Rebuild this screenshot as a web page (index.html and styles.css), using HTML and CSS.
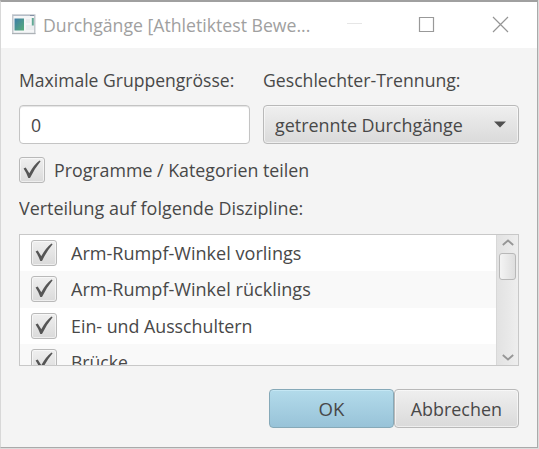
FILE: index.html
```html
<!DOCTYPE html>
<html lang="de">
<head>
<meta charset="utf-8">
<title>Durchgänge</title>
<link rel="stylesheet" href="styles.css">
</head>
<body>
<svg class="defs" width="0" height="0"><defs>
<linearGradient id="appfill" x1="0" y1="0" x2="1" y2="1"><stop offset="0" stop-color="#3e7da8"/><stop offset="1" stop-color="#58ad79"/></linearGradient>
<symbol id="check" viewBox="0 0 18 19"><path d="M.6 8.600 L2.700 7.500 L6.300 13.200 Q10.500 5 16.500 .4 L17.600 1.200 Q11.500 8.500 7 18 L5.300 18 Q3.500 13 .6 8.600Z" fill="#555"/></symbol>
</defs></svg>
<div class="window">
  <header class="titlebar">
    <svg class="app-icon" width="24" height="21" viewBox="0 0 24 21"><rect x=".75" y="1" width="22" height="18.500" fill="#f5f6f7" stroke="#c3c8cd" stroke-width="1.500"/><path d="M0 19.500h23.500" stroke="#adb2b6"/><path d="M1 1.500h22" stroke="#b4bdc8"/><rect x="2.500" y="4.500" width="9.500" height="12" fill="url(#appfill)"/><path d="M14 5h4v4h-4zM14 11h8v5h-8z" fill="#ebedef"/><path d="M20.800 4v7.500" stroke="#62a995" stroke-width="2"/><path d="M18 1.500h4" stroke="#8491a5"/></svg>
    <span class="title"><span class="t t-title">Durchgänge [Athletiktest Bewe...</span></span>
    <svg class="controls" width="170" height="18" viewBox="0 0 170 18"><path d="M0 8.500h15" stroke="#e6e6e6"/><path d="M72.500 2.500h14v14h-14z" fill="none" stroke="#999" stroke-width="1.200"/><path d="M146 2l15 15M161 2l-15 15" stroke="#959595" stroke-width="1.200"/></svg>
  </header>
  <main class="content">
    <div class="fields">
      <label class="label"><span class="t t-max">Maximale Gruppengrösse:</span></label>
      <label class="label"><span class="t t-sex">Geschlechter-Trennung:</span></label>
      <div class="input"><span class="t t-zero">0</span></div>
      <div class="select button-face"><span class="t t-select">getrennte Durchgänge</span><svg class="arrow" width="12" height="7" viewBox="0 0 12 7"><path d="M0 .4h12L6 6.600z" fill="#505050"/></svg></div>
    </div>
    <div class="option"><span class="box button-face"><svg width="18" height="19"><use href="#check"/></svg></span><span class="t t-option">Programme / Kategorien teilen</span></div>
    <div class="list-label"><span class="t t-list">Verteilung auf folgende Diszipline:</span></div>
    <div class="list">
      <div class="rows">
        <div class="row"><span class="box button-face"><svg width="18" height="19"><use href="#check"/></svg></span><span class="t t-r1">Arm-Rumpf-Winkel vorlings</span></div>
        <div class="row"><span class="box button-face"><svg width="18" height="19"><use href="#check"/></svg></span><span class="t t-r2">Arm-Rumpf-Winkel rücklings</span></div>
        <div class="row"><span class="box button-face"><svg width="18" height="19"><use href="#check"/></svg></span><span class="t t-r3">Ein- und Ausschultern</span></div>
        <div class="row"><span class="box button-face"><svg width="18" height="19"><use href="#check"/></svg></span><span class="t t-r4">Brücke</span></div>
      </div>
      <div class="scrollbar">
        <svg width="12" height="7" viewBox="0 0 12 7"><path d="M.8 6L6 1.500 11.200 6" fill="none" stroke="#969696" stroke-width="1.800"/></svg>
        <div class="thumb"></div>
        <svg class="down" width="12" height="7" viewBox="0 0 12 7"><path d="M.8 1L6 5.500 11.200 1" fill="none" stroke="#969696" stroke-width="1.800"/></svg>
      </div>
    </div>
    <div class="actions">
      <div class="button primary"><span class="t t-ok">OK</span></div>
      <div class="button button-face"><span class="t t-cancel">Abbrechen</span></div>
    </div>
  </main>
</div>
</body>
</html>
```
FILE: styles.css
```css
* { box-sizing: border-box; }
body {
  margin: 0;
  width: 539px;
  height: 449px;
  overflow: hidden;
  background: #dcdcdc;
  font: 18.6px/24px "Open Sans", "Noto Sans", sans-serif;
  color: #484848;
}
.defs { display: block; height: 0; }
.window {
  width: 538px;
  height: 448px;
  border: 1px solid #aaa;
  border-top: 2px solid #a0a0a0;
  border-left-color: #d8d8d8;
  background: #f4f4f4;
}
.titlebar {
  display: flex;
  height: 46px;
  padding: 12px 0 0 11px;
  background: #fff;
  color: #a0a0a0;
}
.app-icon { flex: none; }
.title { width: 303px; padding-left: 7px; margin-top: -1px; }
.controls { flex: none; margin-left: 8px; margin-top: 1px; }
.t { display: inline-block; white-space: nowrap; transform-origin: left center; }
.t-title { transform: scaleX(.95); }
.t-max { transform: scaleX(.944); }
.t-sex { transform: scaleX(.949); }
.t-zero { transform: scaleX(.95); }
.t-select { transform: scaleX(.963); }
.t-option { transform: scaleX(.957); }
.t-list { transform: scaleX(.964); }
.t-r1, .t-r2 { transform: scaleX(.972); }
.t-r3 { transform: scaleX(.957); }
.t-r4 { transform: scaleX(.945); }
.t-cancel { transform: scaleX(.962); }
.content { padding: 20px 18px 0; }
.fields {
  display: grid;
  grid-template-columns: 231px 256px;
  grid-template-rows: 37px 39px;
  column-gap: 13px;
}
.input, .select {
  border: 1px solid #c4c4c4;
  border-radius: 4px;
  display: flex;
  align-items: center;
  padding: 0 12px 0 11px;
}
.input { background: #fff; box-shadow: inset 0 1px 1px #e4e4e4; }
.button-face {
  background: linear-gradient(#efefef, #dadada);
  border: 1px solid #b9b9b9;
  box-shadow: inset 0 0 0 1px rgba(255,255,255,.55);
}
.arrow { margin-left: auto; }
.option { display: flex; align-items: center; height: 26px; margin-top: 13px; }
.box {
  flex: none;
  display: flex;
  align-items: center;
  justify-content: center;
  width: 26px;
  height: 26px;
  border-radius: 3px;
}
.box svg { flex: none; margin-top: -1px; }
.option .box { margin-right: 9px; }
.list-label { margin-top: 13px; height: 24px; }
.list {
  display: flex;
  height: 132px;
  margin-top: 14px;
  border: 1px solid #c8c8c8;
  background: #fff;
  overflow: hidden;
}
.rows { flex: 1; }
.row { display: flex; align-items: center; height: 36.300px; padding-left: 11px; }
.row:nth-child(even) { background: #f9f9f9; }
.row .box { margin-right: 14px; }
.scrollbar {
  display: flex;
  flex-direction: column;
  align-items: center;
  width: 22px;
  padding: 4px 0;
  border-left: 1px solid #d8d8d8;
  background: linear-gradient(90deg, #e2e2e2, #eee);
}
.thumb {
  width: 17px;
  height: 27px;
  margin-top: 7px;
  border: 1px solid #b8b8b8;
  border-radius: 3px;
  background: linear-gradient(90deg, #f4f4f4, #dedede);
}
.down { margin-top: auto; }
.actions { display: flex; justify-content: flex-end; margin-top: 23px; }
.button {
  display: flex;
  align-items: center;
  justify-content: center;
  width: 125px;
  height: 39px;
  border-radius: 4px;
}
.button .t { transform-origin: center; }
.primary {
  background: linear-gradient(#b3dbeb, #98c3d8);
  border: 1px solid #86a9b8;
  box-shadow: inset 0 1px 0 #c5e7f4;
}
```
